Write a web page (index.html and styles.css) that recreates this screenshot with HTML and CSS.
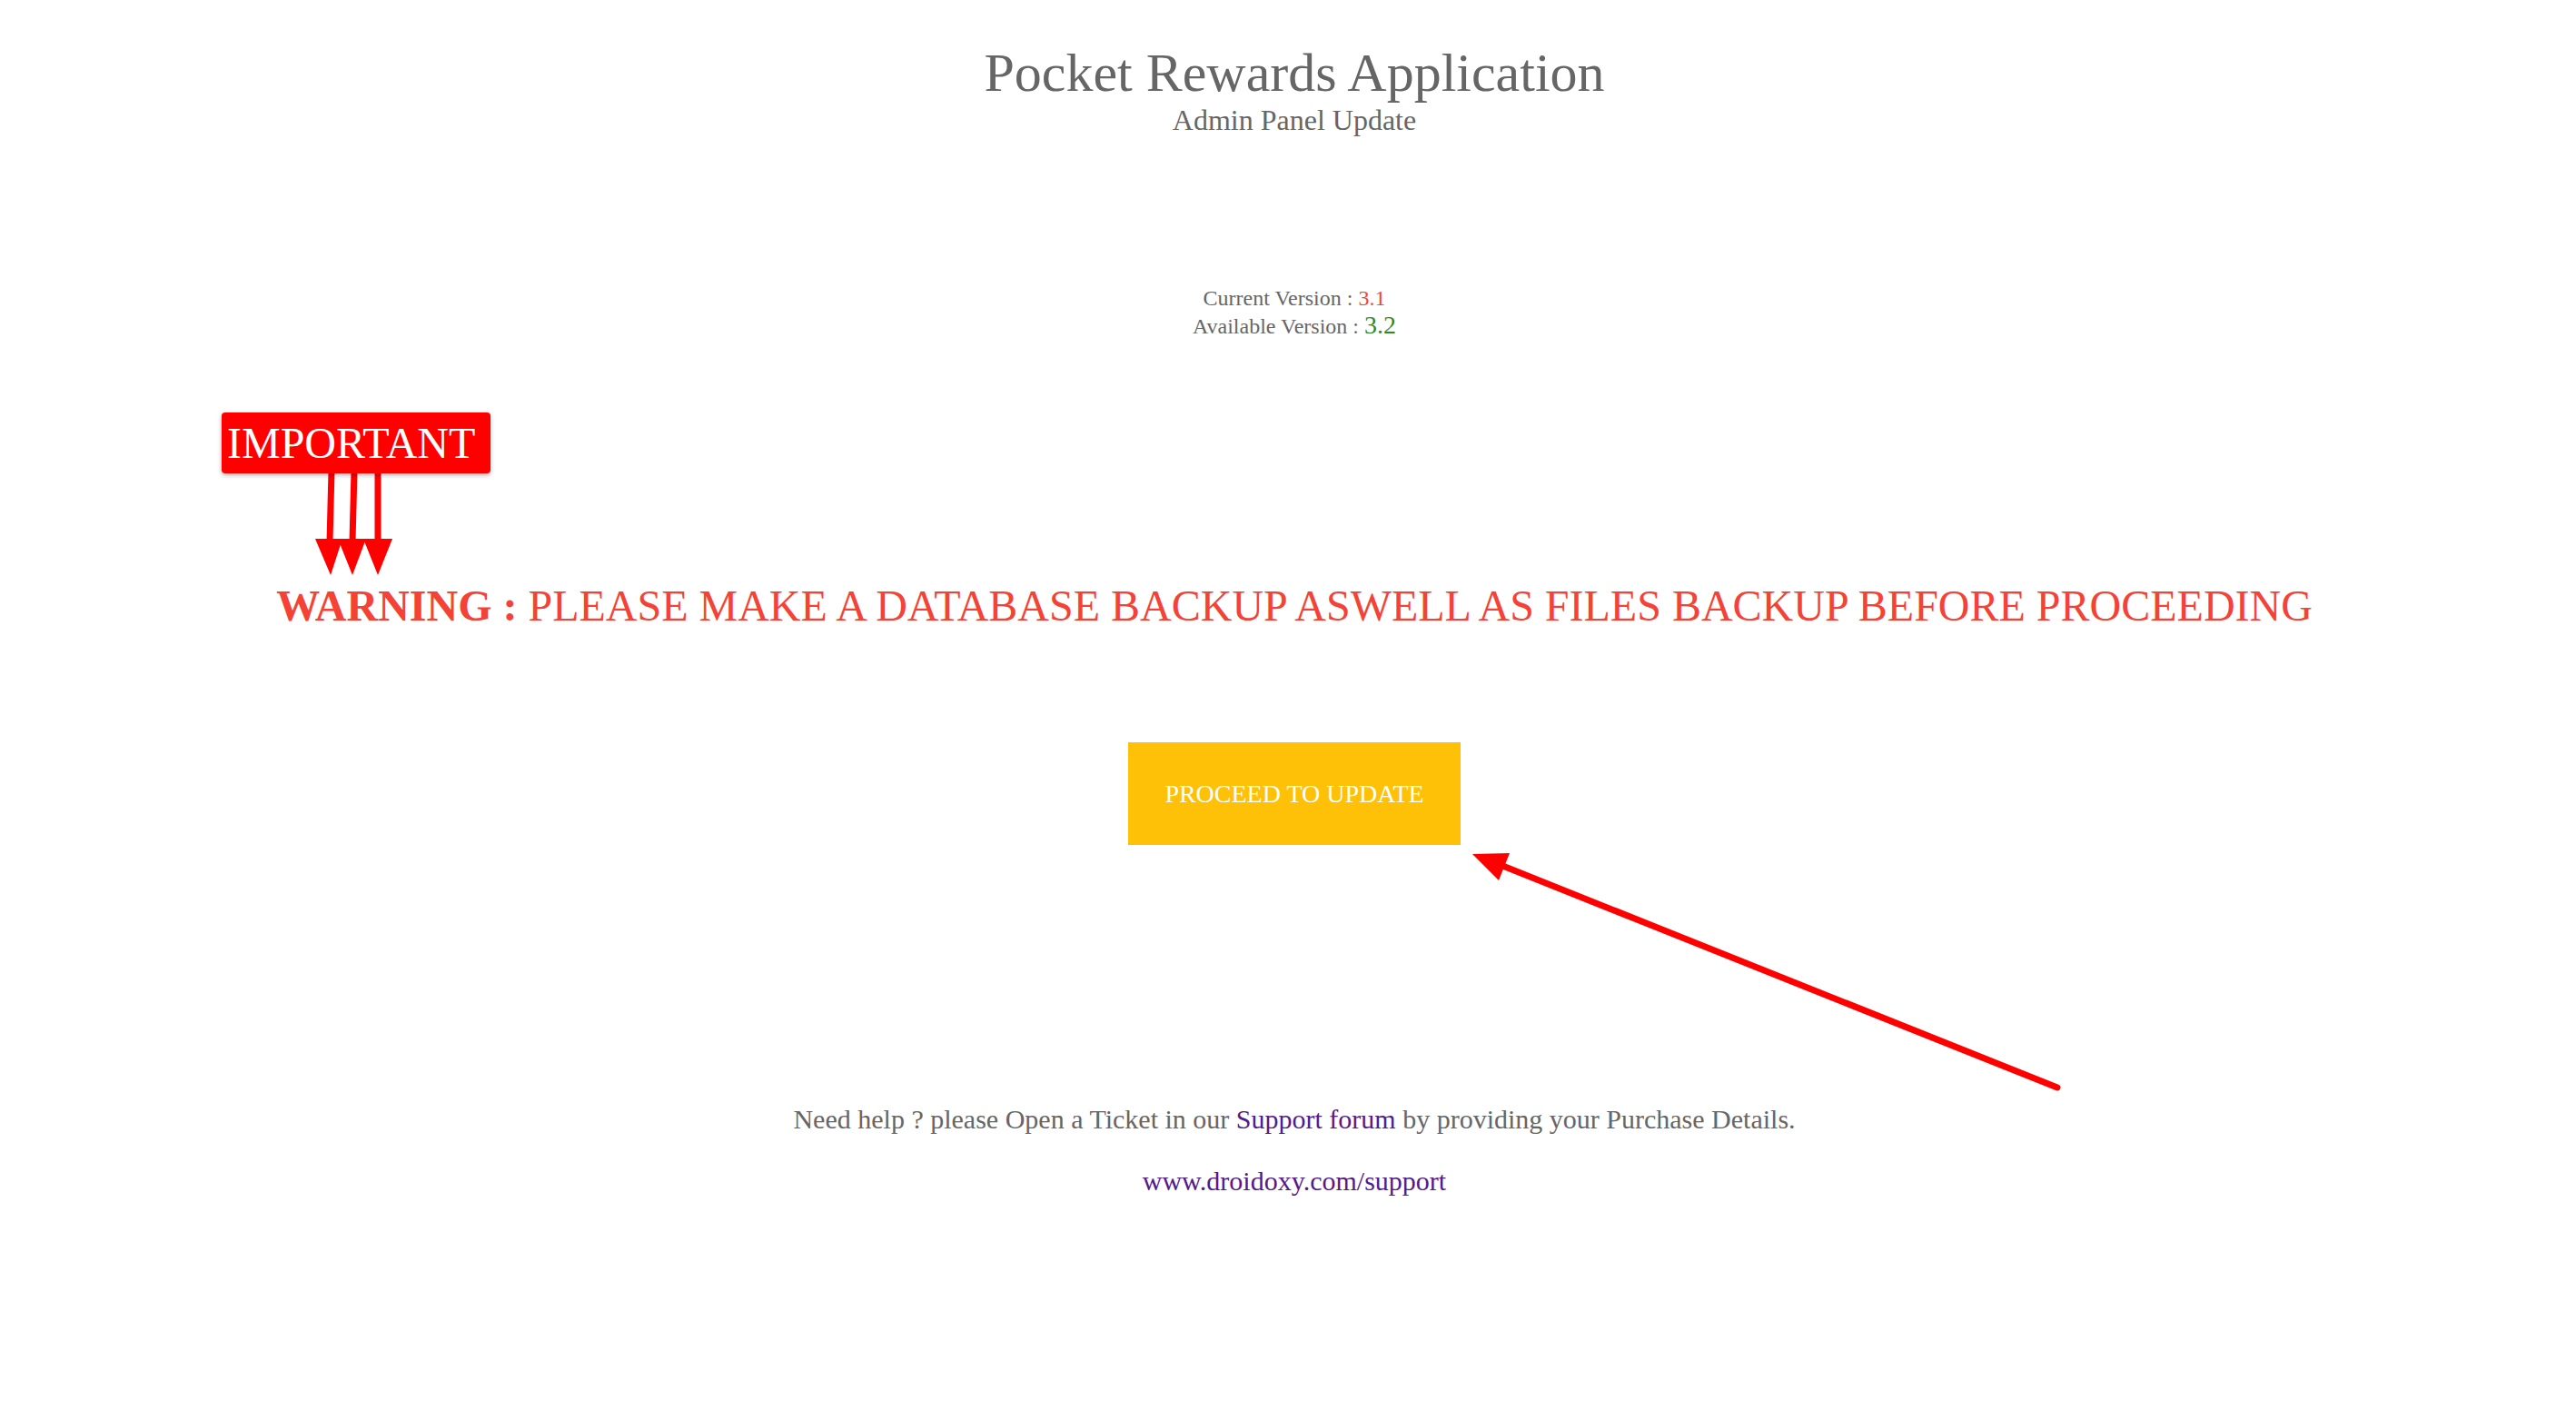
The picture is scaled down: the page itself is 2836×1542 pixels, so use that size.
FILE: index.html
```html
<!DOCTYPE html>
<html lang="en">
<head>
<meta charset="utf-8">
<title>Pocket Rewards Application - Admin Panel Update</title>
<link rel="stylesheet" href="styles.css">
</head>
<body>
<div class="page">
  <h1 class="title">Pocket Rewards Application</h1>
  <div class="subtitle">Admin Panel Update</div>

  <div class="versions">
    <div>Current Version : <span class="cur">3.1</span></div>
    <div>Available Version : <span class="avail">3.2</span></div>
  </div>

  <div class="warning"><b>WARNING :</b> PLEASE MAKE A DATABASE BACKUP ASWELL AS FILES BACKUP BEFORE PROCEEDING</div>

  <a class="btn" href="#">PROCEED TO UPDATE</a>

  <p class="help">Need help ? please Open a Ticket in our <a href="#">Support forum</a> by providing your Purchase Details.</p>
  <p class="url"><a href="#">www.droidoxy.com/support</a></p>

  <svg class="marks" width="2836" height="1542" viewBox="0 0 2836 1542">
    <g fill="#ff0000" stroke="none">
      <polygon points="347,593 377,593 364,633"/>
      <polygon points="372,593 403,593 388,633"/>
      <polygon points="400,593 432,593 416,633"/>
      <polygon points="1621,940 1662,939 1650,969"/>
    </g>
    <g stroke="#ff0000" stroke-width="7" fill="none">
      <line x1="365" y1="518" x2="363" y2="596"/>
      <line x1="390" y1="518" x2="388" y2="596"/>
      <line x1="416" y1="518" x2="416" y2="596"/>
      <line x1="2265" y1="1197" x2="1652" y2="952" stroke-linecap="round"/>
    </g>
  </svg>
  <div class="important">IMPORTANT</div>
</div>
</body>
</html>
```
FILE: styles.css
```css
html, body {
  margin: 0;
  padding: 0;
  background: #ffffff;
}

body {
  font-family: "Liberation Serif", "Times New Roman", serif;
  color: #666666;
}

.page {
  position: relative;
  width: 2836px;
  min-height: 1542px;
  box-sizing: border-box;
  padding-left: 14px;
  padding-top: 50px;
  text-align: center;
}

.title {
  margin: 0;
  font-size: 60px;
  line-height: 1;
  font-weight: normal;
  color: #666666;
}

.subtitle {
  margin-top: 6px;
  font-size: 32px;
  line-height: 1;
}

.versions {
  margin-top: 165px;
  font-size: 24px;
  line-height: 31px;
}

.versions .cur {
  color: #f44336;
}

.versions .avail {
  color: #2e8b22;
  font-size: 28px;
  line-height: 1;
}

.warning {
  margin-top: 268px;
  font-size: 48px;
  line-height: 1;
  color: #f44336;
}

.warning b {
  font-weight: bold;
}

.btn {
  display: block;
  width: 366px;
  height: 113px;
  margin: 126px auto 0;
  background: #ffc107;
  color: #ffffff;
  font-size: 28px;
  line-height: 113px;
  text-decoration: none;
}

.help {
  margin: 287px 0 0;
  font-size: 30px;
  line-height: 1;
}

.url {
  margin: 38px 0 0;
  font-size: 30px;
  line-height: 1;
}

.help a,
.url a {
  color: #551a8b;
  text-decoration: none;
}

.marks {
  position: absolute;
  left: 0;
  top: 0;
  pointer-events: none;
}

.important {
  position: absolute;
  left: 244px;
  top: 454px;
  height: 67px;
  padding: 0 17px 0 6px;
  background: #ff0000;
  color: #ffffff;
  font-size: 48px;
  line-height: 67px;
  border-radius: 4px;
  box-shadow: 0 2px 5px rgba(0, 0, 0, 0.3);
}
```
